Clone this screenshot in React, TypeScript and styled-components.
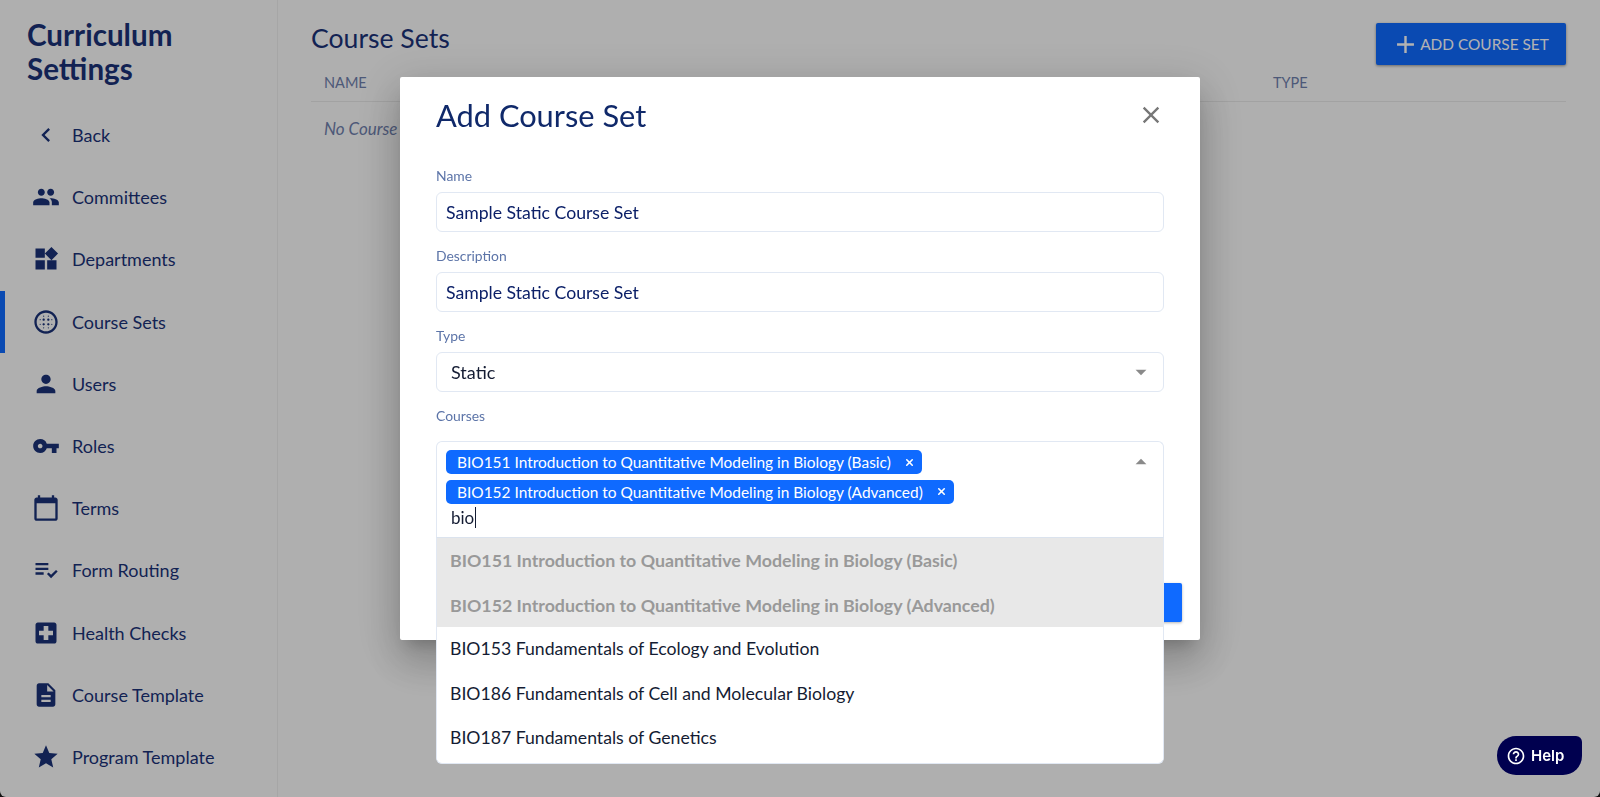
import { createGlobalStyle, styled } from 'styled-components';
import { X } from 'lucide-react';
import {
  MdAdd,
  MdArrowDropDown,
  MdArrowDropUp,
  MdBlurCircular,
  MdCalendarToday,
  MdChevronLeft,
  MdClose,
  MdDescription,
  MdHelpOutline,
  MdLocalHospital,
  MdPeople,
  MdPerson,
  MdPlaylistAddCheck,
  MdStar,
  MdVpnKey,
  MdWidgets,
} from 'react-icons/md';

const GlobalStyle = createGlobalStyle`
  html, body {
    margin: 0;
    height: 100%;
    background: #1a1a1a;
    overflow: hidden;
  }
  * { box-sizing: border-box; }
  body { font-family: Lato, "Noto Sans", sans-serif; }
`;

// Page behind the dialog
const Page = styled.div`
  display: flex;
  height: 797px;
  background: #fbfbfb;
  border-radius: 0 0 6px 6px;
  overflow: hidden;
  position: relative;
`;

const Sidebar = styled.aside`
  width: 278px;
  flex: none;
  border-right: 1px solid #eee;
  padding-top: 18px;
`;

const SideTitle = styled.h1`
  margin: 0 0 19px 27px;
  font-size: 29.6px;
  line-height: 33.5px;
  font-weight: 700;
  color: #1a3278;
`;

const NavList = styled.nav`
  display: flex;
  flex-direction: column;
`;

const NavRow = styled.a<{ $active?: boolean }>`
  display: flex;
  align-items: center;
  height: 62.2px;
  padding-left: 22px;
  gap: 8px;
  font-size: 18px;
  color: #1a3278;
  border-left: 5px solid ${(p) => (p.$active ? '#0f6aff' : 'transparent')};
`;

const NavIcon = styled.span`
  width: 37px;
  display: flex;
  justify-content: center;
  font-size: 28px;
  line-height: 0;
`;

const Main = styled.main`
  flex: 1;
  padding: 23px 34px 0 33px;
`;

const MainHeader = styled.div`
  display: flex;
  justify-content: space-between;
  align-items: flex-start;
  height: 45px;
`;

const PageTitle = styled.h2`
  margin: -1px 0 0;
  font-size: 26.6px;
  line-height: 32px;
  font-weight: 400;
  color: #1a3278;
`;

const AddButton = styled.button`
  display: flex;
  align-items: center;
  justify-content: center;
  width: 190px;
  height: 42px;
  padding: 0 2px 0 0;
  border: 0;
  border-radius: 2px;
  background: #0f6aff;
  color: #fff;
  font-family: inherit;
  font-size: 15.4px;
  box-shadow: 0 1px 3px rgba(0, 0, 0, 0.4);
  svg { font-size: 29px; }
`;

const TableHead = styled.div`
  display: grid;
  grid-template-columns: 949px 1fr;
  padding: 0 13px 4px;
  height: 34px;
  align-items: center;
  border-bottom: 1px solid #e8e8e8;
  font-size: 14.5px;
  color: #6f80ad;
`;

const EmptyRow = styled.div`
  padding: 16px 13px;
  font-size: 17px;
  font-style: italic;
  color: #6f80ad;
`;

// Dialog
const Overlay = styled.div`
  position: fixed;
  inset: 0;
  display: flex;
  justify-content: center;
  align-items: flex-start;
  padding-top: 77px;
  background: rgba(0, 0, 0, 0.3);
`;

const Modal = styled.section`
  width: 800px;
  height: 563px;
  background: #fff;
  border-radius: 2px;
  padding: 0 18px 0 36px;
  box-shadow: 0 11px 15px -7px rgba(0, 0, 0, 0.2), 0 24px 38px 3px rgba(0, 0, 0, 0.14), 0 9px 46px 8px rgba(0, 0, 0, 0.12);
`;

const ModalHeader = styled.header`
  display: flex;
  justify-content: space-between;
  align-items: center;
  height: 75px;
  padding: 2px 18px 0 0;
`;

const ModalTitle = styled.h2`
  margin: 0;
  font-size: 30.8px;
  font-weight: 400;
  color: #10296a;
`;

const CloseIcon = styled(MdClose)`
  font-size: 28px;
  color: #777;
  margin: -2px -1px 0 0;
`;

const Field = styled.div`
  margin-right: 18px;
`;

const FieldLabel = styled.label<{ $gap?: number }>`
  display: block;
  height: 17px;
  margin: 15px 0 ${(p) => p.$gap ?? 8}px;
  line-height: 17px;
  font-size: 13.9px;
  color: #5c74a8;
`;

const TextBox = styled.div`
  height: 40px;
  padding: 0 9px;
  display: flex;
  align-items: center;
  border: 1px solid #e1e8f3;
  border-radius: 6px;
  font-size: 17.65px;
  color: #0c2068;
`;

const SelectBox = styled(TextBox)`
  justify-content: space-between;
  padding: 0 9px 0 14px;
  font-size: 18px;
  color: #141c33;
  svg { font-size: 26px; color: #8a8a8a; }
`;

const MultiWrap = styled.div`
  position: relative;
`;

const MultiBox = styled.div`
  height: 97px;
  padding: 8px 9px 0 9px;
  display: flex;
  justify-content: space-between;
  align-items: flex-start;
  border: 1px solid #e1e8f3;
  border-bottom-color: #dbe3ee;
  border-radius: 6px 6px 0 0;
`;

const ChipColumn = styled.div`
  display: flex;
  flex-direction: column;
  align-items: flex-start;
  gap: 5.5px;
`;

const Chip = styled.span`
  display: flex;
  align-items: center;
  height: 24px;
  padding: 0 7px 0 11px;
  gap: 13px;
  border-radius: 5px;
  background: #0f6aff;
  color: #fff;
  font-size: 15.45px;
  white-space: nowrap;
`;

const SearchText = styled.div`
  margin: -3px 0 0 5px;
  font-size: 17px;
  line-height: 24px;
  color: #141c33;
  span { border-right: 1px solid #141c33; padding-right: 1px; }
`;

const ArrowUp = styled(MdArrowDropUp)`
  font-size: 26px;
  color: #8a8a8a;
  flex: none;
  margin-top: -1px;
`;

const Menu = styled.ul`
  position: absolute;
  top: 100%;
  left: 0;
  right: 0;
  margin: 0;
  padding: 0 0 3px;
  list-style: none;
  background: #fff;
  border: 1px solid #e1e8f3;
  border-top: 0;
  border-radius: 0 0 6px 6px;
  z-index: 2;
`;

const MenuItem = styled.li<{ $taken?: boolean }>`
  display: flex;
  align-items: center;
  height: 44.4px;
  padding-left: 13px;
  font-size: ${(p) => (p.$taken ? 17.8 : 17.65)}px;
  font-weight: ${(p) => (p.$taken ? 700 : 400)};
  color: ${(p) => (p.$taken ? '#999' : '#141c33')};
  background: ${(p) => (p.$taken ? '#e8e8e8' : '#fff')};
`;

const ModalFooter = styled.footer`
  display: flex;
  justify-content: flex-end;
  margin-top: 45px;
`;

const SaveButton = styled.button`
  width: 120px;
  height: 39px;
  border: 0;
  border-radius: 2px;
  background: #0f6aff;
  color: #fff;
  font-family: inherit;
  font-size: 16px;
  box-shadow: 0 1px 3px rgba(0, 0, 0, 0.3);
`;

const HelpButton = styled.button`
  position: fixed;
  left: 1497px;
  top: 736px;
  display: flex;
  align-items: center;
  width: 85px;
  height: 39px;
  padding: 0 0 0 9px;
  gap: 5px;
  border: 0;
  border-radius: 19px 6px 19px 19px;
  background: #00004f;
  color: #fff;
  font-family: Inter, "Liberation Sans", sans-serif;
  font-size: 15px;
  font-weight: 600;
  svg { font-size: 20px; }
`;

const navItems = [
  { label: 'Back', icon: <MdChevronLeft /> },
  { label: 'Committees', icon: <MdPeople /> },
  { label: 'Departments', icon: <MdWidgets /> },
  { label: 'Course Sets', icon: <MdBlurCircular />, active: true },
  { label: 'Users', icon: <MdPerson /> },
  { label: 'Roles', icon: <MdVpnKey /> },
  { label: 'Terms', icon: <MdCalendarToday /> },
  { label: 'Form Routing', icon: <MdPlaylistAddCheck /> },
  { label: 'Health Checks', icon: <MdLocalHospital /> },
  { label: 'Course Template', icon: <MdDescription /> },
  { label: 'Program Template', icon: <MdStar /> },
];

const chips = [
  'BIO151 Introduction to Quantitative Modeling in Biology (Basic)',
  'BIO152 Introduction to Quantitative Modeling in Biology (Advanced)',
];

const otherCourses = [
  'BIO153 Fundamentals of Ecology and Evolution',
  'BIO186 Fundamentals of Cell and Molecular Biology',
  'BIO187 Fundamentals of Genetics',
];

export default function App() {
  return (
    <>
      <GlobalStyle />
      <Page>
        <Sidebar>
          <SideTitle>
            Curriculum
            <br />
            Settings
          </SideTitle>
          <NavList>
            {navItems.map((item) => (
              <NavRow key={item.label} $active={item.active}>
                <NavIcon>{item.icon}</NavIcon>
                {item.label}
              </NavRow>
            ))}
          </NavList>
        </Sidebar>
        <Main>
          <MainHeader>
            <PageTitle>Course Sets</PageTitle>
            <AddButton>
              <MdAdd />
              ADD COURSE SET
            </AddButton>
          </MainHeader>
          <TableHead>
            <span>NAME</span>
            <span>TYPE</span>
          </TableHead>
          <EmptyRow>No Course Sets</EmptyRow>
        </Main>
      </Page>
      <Overlay>
        <Modal>
          <ModalHeader>
            <ModalTitle>Add Course Set</ModalTitle>
            <CloseIcon />
          </ModalHeader>
          <Field>
            <FieldLabel>Name</FieldLabel>
            <TextBox>Sample Static Course Set</TextBox>
          </Field>
          <Field>
            <FieldLabel>Description</FieldLabel>
            <TextBox>Sample Static Course Set</TextBox>
          </Field>
          <Field>
            <FieldLabel>Type</FieldLabel>
            <SelectBox>
              Static
              <MdArrowDropDown />
            </SelectBox>
          </Field>
          <Field>
            <FieldLabel $gap={17}>Courses</FieldLabel>
            <MultiWrap>
              <MultiBox>
                <ChipColumn>
                  {chips.map((chip) => (
                    <Chip key={chip}>
                      {chip}
                      <X size={11} strokeWidth={3.5} />
                    </Chip>
                  ))}
                  <SearchText>
                    <span>bio</span>
                  </SearchText>
                </ChipColumn>
                <ArrowUp />
              </MultiBox>
              <Menu>
                {chips.map((chip) => (
                  <MenuItem key={chip} $taken>
                    {chip}
                  </MenuItem>
                ))}
                {otherCourses.map((course) => (
                  <MenuItem key={course}>{course}</MenuItem>
                ))}
              </Menu>
            </MultiWrap>
          </Field>
          <ModalFooter>
            <SaveButton>SAVE</SaveButton>
          </ModalFooter>
        </Modal>
      </Overlay>
      <HelpButton>
        <MdHelpOutline />
        Help
      </HelpButton>
    </>
  );
}
